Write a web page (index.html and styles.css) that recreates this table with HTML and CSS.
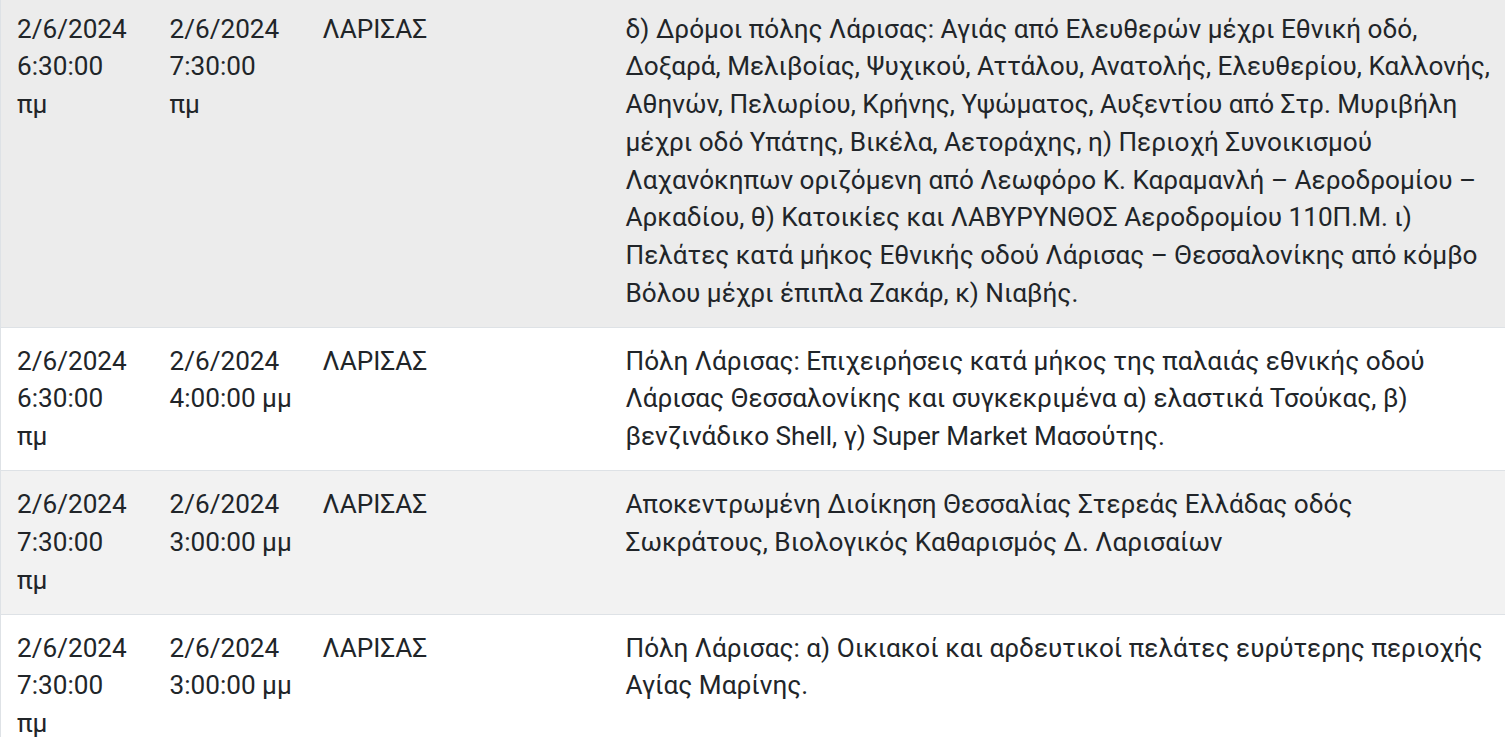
FILE: index.html
```html
<!DOCTYPE html>
<html lang="el">
<head>
<meta charset="utf-8">
<link rel="stylesheet" href="styles.css">
</head>
<body>
<table class="outages">
  <colgroup>
    <col class="c-date">
    <col class="c-date">
    <col class="c-area">
    <col class="c-desc">
  </colgroup>
  <tbody>
    <tr class="row-hover">
      <td>2/6/2024 6:30:00 πμ</td>
      <td>2/6/2024 7:30:00 πμ</td>
      <td>ΛΑΡΙΣΑΣ</td>
      <td>δ) Δρόμοι πόλης Λάρισας: Αγιάς από Ελευθερών μέχρι Εθνική οδό, Δοξαρά, Μελιβοίας, Ψυχικού, Αττάλου, Ανατολής, Ελευθερίου, Καλλονής, Αθηνών, Πελωρίου, Κρήνης, Υψώματος, Αυξεντίου από Στρ. Μυριβήλη μέχρι οδό Υπάτης, Βικέλα, Αετοράχης, η) Περιοχή Συνοικισμού Λαχανόκηπων οριζόμενη από Λεωφόρο Κ. Καραμανλή – Αεροδρομίου – Αρκαδίου, θ) Κατοικίες και ΛΑΒΥΡΥΝΘΟΣ Αεροδρομίου 110Π.Μ. ι) Πελάτες κατά μήκος Εθνικής οδού Λάρισας – Θεσσαλονίκης από κόμβο Βόλου μέχρι έπιπλα Ζακάρ, κ) Νιαβής.</td>
    </tr>
    <tr>
      <td>2/6/2024 6:30:00 πμ</td>
      <td>2/6/2024 4:00:00 μμ</td>
      <td>ΛΑΡΙΣΑΣ</td>
      <td>Πόλη Λάρισας: Επιχειρήσεις κατά μήκος της παλαιάς εθνικής οδού Λάρισας Θεσσαλονίκης και συγκεκριμένα α) ελαστικά Τσούκας, β) βενζινάδικο Shell, γ) Super Market Μασούτης.</td>
    </tr>
    <tr class="row-stripe">
      <td>2/6/2024 7:30:00 πμ</td>
      <td>2/6/2024 3:00:00 μμ</td>
      <td>ΛΑΡΙΣΑΣ</td>
      <td>Αποκεντρωμένη Διοίκηση Θεσσαλίας Στερεάς Ελλάδας οδός Σωκράτους, Βιολογικός Καθαρισμός Δ. Λαρισαίων</td>
    </tr>
    <tr>
      <td>2/6/2024 7:30:00 πμ</td>
      <td>2/6/2024 3:00:00 μμ</td>
      <td>ΛΑΡΙΣΑΣ</td>
      <td>Πόλη Λάρισας: α) Οικιακοί και αρδευτικοί πελάτες ευρύτερης περιοχής Αγίας Μαρίνης.</td>
    </tr>
  </tbody>
</table>
</body>
</html>
```

FILE: styles.css
```css
html, body {
  margin: 0;
  padding: 0;
  background: #ffffff;
}

body {
  font-family: Roboto, "Noto Sans", Arial, sans-serif;
  color: #212529;
  overflow: hidden;
}

.outages {
  width: 1520px;
  margin-top: -5px;
  border-collapse: collapse;
  table-layout: fixed;
  border-left: 1px solid #dee2e6;
  font-size: 26.15px;
  line-height: 37.7px;
}

.c-date { width: 153px; }
.c-area { width: 303px; }

.outages td {
  vertical-align: top;
  padding: 14.7px 14.25px 14.7px 16px;
  border-top: 1px solid #dee2e6;
}

.outages td:last-child {
  padding-right: 28px;
}

.row-hover { background: #ececec; }
.row-stripe { background: #f2f2f2; }
```
